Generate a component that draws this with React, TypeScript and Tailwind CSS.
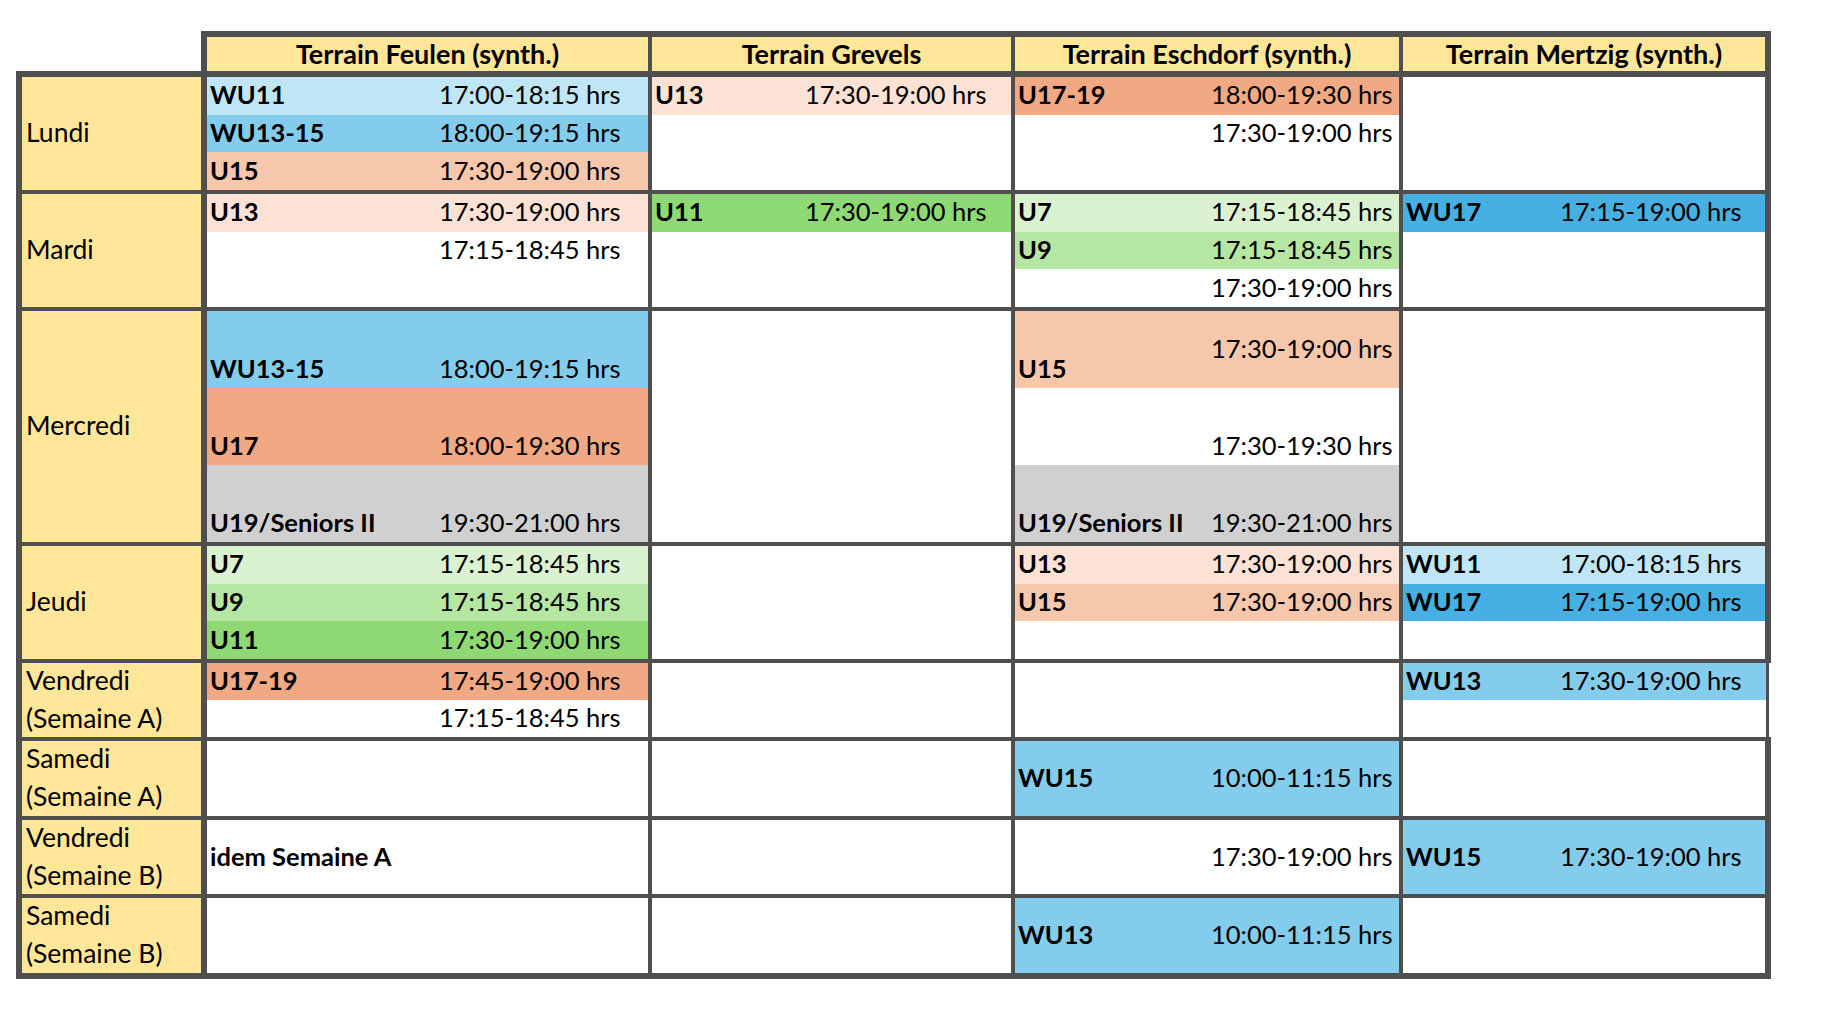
import React from 'react'

type Block = {
    span?: 1 | 2 | 3
    bg?: string
    team?: string
    time?: string
    align?: 'row' | 'bottom' | 'center' | 'split'
}

type Day = {
    label: string[]
    h: string
    cells: Block[][]
}

// fill colours (Office 2023 theme tints)
const LB = 'bg-[#c0e6f5]'
const MB = 'bg-[#83cceb]'
const DB = 'bg-[#45b0e1]'
const P1 = 'bg-[#fbe2d5]'
const P2 = 'bg-[#f7c7ac]'
const P3 = 'bg-[#f1a983]'
const G1 = 'bg-[#daf2d0]'
const G2 = 'bg-[#b5e6a2]'
const G3 = 'bg-[#8ed973]'
const GR = 'bg-[#d0d0d0]'

const grow: Record<number, string> = {
    1: 'flex-[1_1_0%]',
    2: 'flex-[2_2_0%]',
    3: 'flex-[3_3_0%]',
}

const columns = [
    { name: 'Terrain Feulen (synth.)', teamW: 'w-[232px]' },
    { name: 'Terrain Grevels', teamW: 'w-[153px]' },
    { name: 'Terrain Eschdorf (synth.)', teamW: 'w-[196px]' },
    { name: 'Terrain Mertzig (synth.)', teamW: 'w-[157px]' },
]

const days: Day[] = [
    {
        label: ['Lundi'],
        h: 'h-[113px]',
        cells: [
            [
                { bg: LB, team: 'WU11', time: '17:00-18:15 hrs' },
                { bg: MB, team: 'WU13-15', time: '18:00-19:15 hrs' },
                { bg: P2, team: 'U15', time: '17:30-19:00 hrs' },
            ],
            [{ bg: P1, team: 'U13', time: '17:30-19:00 hrs' }, {}, {}],
            [{ bg: P3, team: 'U17-19', time: '18:00-19:30 hrs' }, { time: '17:30-19:00 hrs' }, {}],
            [{ span: 3 }],
        ],
    },
    {
        label: ['Mardi'],
        h: 'h-[113px]',
        cells: [
            [{ bg: P1, team: 'U13', time: '17:30-19:00 hrs' }, { time: '17:15-18:45 hrs' }, {}],
            [{ bg: G3, team: 'U11', time: '17:30-19:00 hrs' }, {}, {}],
            [
                { bg: G1, team: 'U7', time: '17:15-18:45 hrs' },
                { bg: G2, team: 'U9', time: '17:15-18:45 hrs' },
                { time: '17:30-19:00 hrs' },
            ],
            [{ bg: DB, team: 'WU17', time: '17:15-19:00 hrs' }, {}, {}],
        ],
    },
    {
        label: ['Mercredi'],
        h: 'h-[231px]',
        cells: [
            [
                { span: 2, bg: MB, team: 'WU13-15', time: '18:00-19:15 hrs', align: 'bottom' },
                { span: 2, bg: P3, team: 'U17', time: '18:00-19:30 hrs', align: 'bottom' },
                { span: 2, bg: GR, team: 'U19/Seniors II', time: '19:30-21:00 hrs', align: 'bottom' },
            ],
            [{ span: 3 }],
            [
                { span: 2, bg: P2, team: 'U15', time: '17:30-19:00 hrs', align: 'split' },
                { span: 2, time: '17:30-19:30 hrs', align: 'bottom' },
                { span: 2, bg: GR, team: 'U19/Seniors II', time: '19:30-21:00 hrs', align: 'bottom' },
            ],
            [{ span: 3 }],
        ],
    },
    {
        label: ['Jeudi'],
        h: 'h-[113px]',
        cells: [
            [
                { bg: G1, team: 'U7', time: '17:15-18:45 hrs' },
                { bg: G2, team: 'U9', time: '17:15-18:45 hrs' },
                { bg: G3, team: 'U11', time: '17:30-19:00 hrs' },
            ],
            [{ span: 3 }],
            [{ bg: P1, team: 'U13', time: '17:30-19:00 hrs' }, { bg: P2, team: 'U15', time: '17:30-19:00 hrs' }, {}],
            [{ bg: LB, team: 'WU11', time: '17:00-18:15 hrs' }, { bg: DB, team: 'WU17', time: '17:15-19:00 hrs' }, {}],
        ],
    },
    {
        label: ['Vendredi', '(Semaine A)'],
        h: 'h-[74px]',
        cells: [
            [{ bg: P3, team: 'U17-19', time: '17:45-19:00 hrs' }, { time: '17:15-18:45 hrs' }],
            [{ span: 2 }],
            [{ span: 2 }],
            [{ bg: MB, team: 'WU13', time: '17:30-19:00 hrs' }, {}],
        ],
    },
    {
        label: ['Samedi', '(Semaine A)'],
        h: 'h-[75px]',
        cells: [
            [{ span: 2 }],
            [{ span: 2 }],
            [{ span: 2, bg: MB, team: 'WU15', time: '10:00-11:15 hrs', align: 'center' }],
            [{ span: 2 }],
        ],
    },
    {
        label: ['Vendredi', '(Semaine B)'],
        h: 'h-[74px]',
        cells: [
            [{ span: 2, team: 'idem Semaine A', align: 'center' }],
            [{ span: 2 }],
            [{ span: 2, time: '17:30-19:00 hrs', align: 'center' }],
            [{ span: 2, bg: MB, team: 'WU15', time: '17:30-19:00 hrs', align: 'center' }],
        ],
    },
    {
        label: ['Samedi', '(Semaine B)'],
        h: 'h-[75px]',
        cells: [
            [{ span: 2 }],
            [{ span: 2 }],
            [{ span: 2, bg: MB, team: 'WU13', time: '10:00-11:15 hrs', align: 'center' }],
            [{ span: 2 }],
        ],
    },
]

const Slot: React.FC<{ b: Block; teamW: string }> = ({ b, teamW }) =>
{
    const span = b.span ?? 1
    const bg = b.bg ?? 'bg-white'
    const team = (
        <span className={`${teamW} shrink-0 pl-[3px] font-bold whitespace-nowrap`}>{b.team}</span>
    )
    const time = <span className="whitespace-nowrap">{b.time}</span>

    if (b.align === 'bottom')
    {
        return (
            <div className={`${grow[span]} ${bg} flex items-end min-h-0`}>
                <div className="flex items-center h-[38px] pb-[3px] w-full">
                    {team}
                    {time}
                </div>
            </div>
        )
    }

    if (b.align === 'split')
    {
        return (
            <div className={`${grow[span]} ${bg} flex min-h-0`}>
                <div className={`${teamW} shrink-0 self-end h-[38px] pb-[3px] flex items-center pl-[3px] font-bold`}>{b.team}</div>
                <div className="self-center pb-[3px] whitespace-nowrap">{b.time}</div>
            </div>
        )
    }

    return (
        <div className={`${grow[span]} ${bg} flex items-center pb-[3px] min-h-0`}>
            {team}
            {time}
        </div>
    )
}

const App: React.FC = () =>
{
    return (
        <div className="w-full h-[1016px] bg-white pt-[31px] pl-[16px] font-[Lato,sans-serif] text-[25.5px] leading-[30px] text-black">
            {/* Header */}
            <div className="flex">
                <div className="w-[185px] shrink-0" />
                <div className="bg-[#4f4f4f] pt-[6px] px-[6px] grid grid-cols-[441px_359px_384px_362px] gap-x-[4px]">
                    {columns.map((c) => (
                        <div key={c.name} className="h-[34px] bg-[#ffe699] flex items-center justify-center font-bold text-[27px]">
                            {c.name}
                        </div>
                    ))}
                </div>
            </div>

            {/* Body */}
            <div className="w-[1755px] bg-[#4f4f4f] p-[6px] grid grid-cols-[181px_441px_359px_384px_362px] gap-[4px]">
                {days.map((d, di) => (
                    <React.Fragment key={di}>
                        <div className={`${d.h} bg-[#ffe699] border-r-2 border-[#4f4f4f] flex flex-col justify-center pl-[4px] pb-[3px] text-[26.5px] leading-[38px]`}>
                            {d.label.map((l) => (
                                <div key={l}>{l}</div>
                            ))}
                        </div>
                        {d.cells.map((col, ci) => (
                            <div
                                key={ci}
                                className={`${d.h} flex ${ci === 3 && di === 4 ? 'mr-[-6px]' : ''}`}
                            >
                                <div className="flex flex-col flex-1 min-w-0">
                                    {col.map((b, bi) => (
                                        <Slot key={bi} b={b} teamW={columns[ci].teamW} />
                                    ))}
                                </div>
                                {ci === 3 && di === 4 && (
                                    <>
                                        <div className="w-[3px] bg-[#4f4f4f]" />
                                        <div className="w-[2px] bg-white" />
                                    </>
                                )}
                            </div>
                        ))}
                    </React.Fragment>
                ))}
            </div>
        </div>
    )
}

export default App
